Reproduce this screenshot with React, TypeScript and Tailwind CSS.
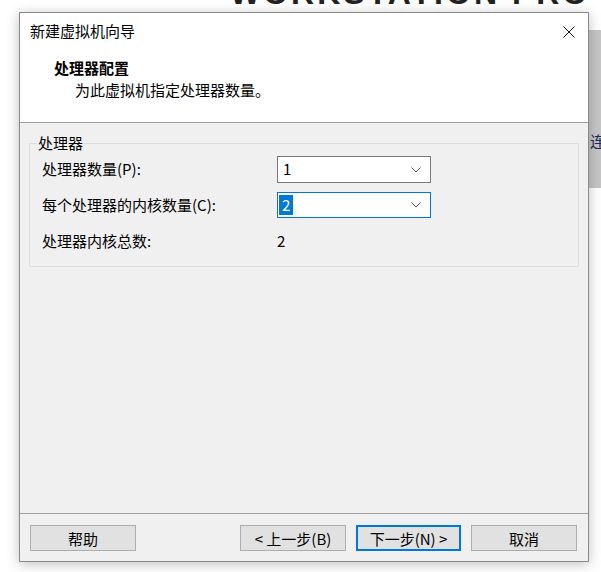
import React from 'react';

const font = { fontFamily: '"Noto Sans CJK SC", "Noto Sans", sans-serif' };

function Chevron() {
  return (
    <svg width="10" height="6" viewBox="0 0 10 6" className="text-[#505050]">
      <path d="M0.5 0.5 L5 5 L9.5 0.5" fill="none" stroke="currentColor" strokeWidth="1" />
    </svg>
  );
}

function WinButton({ label, primary }: { label: string; primary?: boolean }) {
  return (
    <button
      className={
        primary
          ? 'h-[26px] w-[105px] bg-[#e1e1e1] border-2 border-[#0078d7] text-[15px] leading-none text-black'
          : 'h-[26px] w-[106px] bg-[#e1e1e1] border border-[#adadad] text-[15px] leading-none text-black'
      }
    >
      {label}
    </button>
  );
}

export default function App() {
  return (
    <div className="relative w-[601px] h-[572px] overflow-hidden bg-white" style={font}>
      {/* desktop behind the dialog */}
      <div
        className="absolute left-[230px] top-[-23px] text-[32px] font-bold tracking-[3px] text-[#222] leading-none whitespace-nowrap"
        style={{ fontFamily: '"Liberation Sans", sans-serif' }}
      >
        WORKSTATION PRO
      </div>
      <div className="absolute left-[589px] top-[30px] w-[12px] h-[158px] bg-[#c6c6c6] overflow-hidden">
        <span className="absolute left-[1px] top-[103px] text-[15px] leading-none text-[#1a2a5a] whitespace-nowrap">连接</span>
      </div>

      <div className="relative z-10 pt-[12px] pl-[19px] w-fit">
        <div className="w-[570px] h-[550px] border border-[#8a8a8a] bg-[#f0f0f0] flex flex-col shadow-[0_2px_12px_rgba(0,0,0,0.25)]">
          {/* title bar + header */}
          <div className="bg-white h-[109px] flex flex-col">
            <div className="h-[37px] flex items-center justify-between pl-[10px] pr-[13px]">
              <span className="text-[15px] text-black">新建虚拟机向导</span>
              <svg width="12" height="12" viewBox="0 0 12 12">
                <path d="M0.5 0.5 L11.5 11.5 M11.5 0.5 L0.5 11.5" stroke="#111" strokeWidth="1" />
              </svg>
            </div>
            <div className="pl-[34px] pt-[7px] text-[15px] leading-[21px] font-bold text-black">处理器配置</div>
            <div className="pl-[55px] pt-[1px] text-[15px] leading-[21px] text-black">为此虚拟机指定处理器数量。</div>
          </div>
          <div className="h-px bg-[#a0a0a0]" />

          {/* body */}
          <div className="flex-1 px-[9px] pt-[10px]">
            <fieldset className="border border-[#dcdcdc] pb-[12px]">
              <legend className="ml-[7px] px-[1px] text-[15px] leading-[20px] text-black">处理器</legend>
              <div className="flex flex-col pl-[12px] pt-[3px] text-[15px] text-black">
                <div className="flex items-center h-[27px]">
                  <span className="w-[235px]">处理器数量(P):</span>
                  <div className="w-[154px] h-[27px] bg-white border border-[#7a7a7a] flex items-center justify-between pl-[5px] pr-[9px]">
                    <span>1</span>
                    <Chevron />
                  </div>
                </div>
                <div className="flex items-center h-[26px] mt-[9px]">
                  <span className="w-[235px]">每个处理器的内核数量(C):</span>
                  <div className="w-[154px] h-[26px] bg-white border border-[#0078d7] flex items-center justify-between pl-[1px] pr-[9px]">
                    <span className="bg-[#0078d7] text-white px-[3px] leading-[20px]">2</span>
                    <Chevron />
                  </div>
                </div>
                <div className="flex items-center h-[26px] mt-[10px]">
                  <span className="w-[235px]">处理器内核总数:</span>
                  <span>2</span>
                </div>
              </div>
            </fieldset>
          </div>

          {/* footer */}
          <div className="h-px bg-[#a0a0a0]" />
          <div className="h-[47px] flex items-start pt-[11px] pl-[10px] pr-[11px]">
            <WinButton label="帮助" />
            <div className="flex-1" />
            <div className="flex gap-[10px]">
              <WinButton label="< 上一步(B)" />
              <WinButton label="下一步(N) >" primary />
              <WinButton label="取消" />
            </div>
          </div>
        </div>
      </div>
    </div>
  );
}
